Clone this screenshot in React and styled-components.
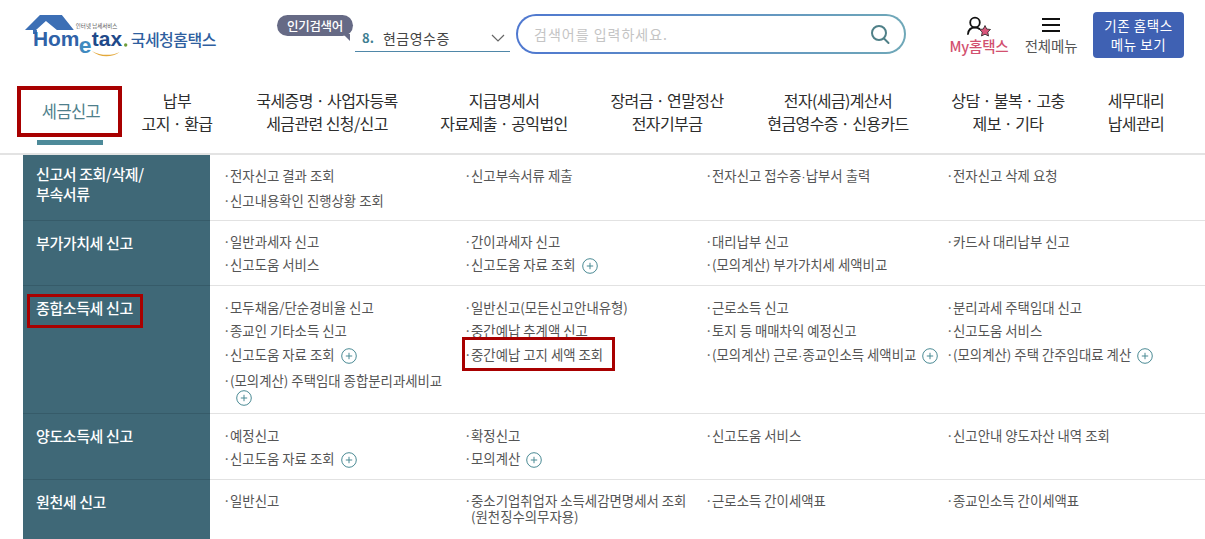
import React from 'react';
import styled, { createGlobalStyle } from 'styled-components';

const GlobalStyle = createGlobalStyle`
  html, body { margin: 0; padding: 0; background: #fff; }
  body { font-family: "Noto Sans CJK KR", "Noto Sans", sans-serif; color: #444; }
`;

const Page = styled.div`
  width: 1205px;
  height: 539px;
  overflow: hidden;
`;

const Header = styled.header`
  display: flex;
  align-items: flex-start;
  height: 75px;
  padding-left: 24px;
  box-sizing: border-box;
`;

const LogoWrap = styled.div`
  display: flex;
  align-items: flex-start;
  width: 192px;
  margin-top: 14px;
  margin-right: 61px;
`;

const LogoName = styled.span`
  margin-top: 14px;
  margin-left: 1px;
  font-size: 16px;
  line-height: 22px;
  font-weight: 500;
  letter-spacing: -0.5px;
  color: #2f5f9f;
  white-space: nowrap;
`;

const HotTag = styled.div`
  position: relative;
  width: 76px;
  height: 21px;
  margin-top: 15px;
  margin-right: 2px;
  border-radius: 11px;
  background: #666a85;
  color: #fff;
  font-size: 12.5px;
  font-weight: 500;
  line-height: 21px;
  text-align: center;
  letter-spacing: -0.3px;

  &::after {
    content: "";
    position: absolute;
    right: 3px;
    bottom: -5px;
    border-top: 7px solid #666a85;
    border-left: 7px solid transparent;
  }
`;

const HotSelect = styled.div`
  display: flex;
  align-items: center;
  width: 155px;
  height: 28px;
  margin-top: 24px;
  margin-right: 6px;
  padding-left: 7px;
  box-sizing: border-box;
  border-bottom: 1px solid #4f87a8;
  font-size: 14px;
  color: #444;
`;

const HotNum = styled.b`
  color: #3f7f92;
  font-size: 13px;
  font-weight: 700;
  margin-right: 9px;
`;

const HotText = styled.span`
  flex: 1;
  letter-spacing: 0.5px;
`;

const Chevron = styled.svg`
  width: 14px;
  height: 8px;
  margin-right: 5px;
`;

const SearchBox = styled.div`
  display: flex;
  align-items: center;
  justify-content: space-between;
  width: 390px;
  height: 40px;
  margin-top: 14px;
  padding: 0 13px 0 16px;
  box-sizing: border-box;
  border: 2px solid transparent;
  border-radius: 20px;
  background: linear-gradient(#fff, #fff) padding-box,
    linear-gradient(90deg, #4f78d0, #6fa8b8) border-box;
`;

const Placeholder = styled.span`
  font-size: 14px;
  letter-spacing: 1px;
  color: #c4c4c4;
`;

const TopLink = styled.div`
  display: flex;
  flex-direction: column;
  align-items: center;
  width: ${p => p.$w}px;
  margin-left: ${p => p.$ml}px;
  margin-top: 15px;
`;

const TopIcon = styled.svg`
  width: 30px;
  height: 22px;
`;

const TopLabel = styled.span`
  font-size: 14.5px;
  line-height: 18px;
  white-space: nowrap;
  letter-spacing: -0.2px;
  font-weight: ${p => p.$pink ? 500 : 400};
  color: ${p => p.$pink ? '#d2506f' : '#555'};
`;

const OldMenuButton = styled.button`
  width: 91px;
  height: 46px;
  margin-top: 12px;
  margin-left: 14px;
  padding: 0;
  border: 0;
  border-radius: 4px;
  background: #3f61b3;
  color: #fff;
  font-family: inherit;
  font-size: 13.5px;
  line-height: 19px;
  letter-spacing: 0.6px;
`;

const Nav = styled.nav`
  display: grid;
  grid-template-columns: 105px 110px 190px 164px 162px 180px 160px 96px;
  align-items: start;
  padding: 11px 0 0 17px;
  border-bottom: 2px solid #e3e3e3;
  height: 80px;
  box-sizing: border-box;
`;

const NavCell = styled.div`
  display: flex;
  flex-direction: column;
  align-items: center;
`;

const NavLabel = styled.a`
  display: flex;
  align-items: center;
  justify-content: center;
  width: 100%;
  height: 51px;
  box-sizing: border-box;
  padding-left: ${p => p.$active ? '3px' : '0'};
  text-align: center;
  font-size: ${p => p.$active ? '16.5px' : '16px'};
  line-height: 23px;
  letter-spacing: -0.6px;
  white-space: pre-line;
  color: ${p => p.$active ? '#4f7f8c' : '#2d2d2d'};
  border: ${p => p.$active ? '4px solid #a80000' : '0'};
`;

const NavBar = styled.span`
  width: 66px;
  height: 5px;
  margin-top: 3px;
  background: #4d8a99;
`;

const Table = styled.div`
  margin-left: 23px;
`;

const Row = styled.section`
  display: flex;
  min-height: ${p => p.$h}px;
  border-bottom: 1px solid #e2e2e2;
`;

const RowHead = styled.div`
  flex: 0 0 187px;
  box-sizing: border-box;
  padding: 9px 8px 0 13px;
  background: #3f6877;
  border-bottom: 1px solid #365b69;
  margin-bottom: -1px;
`;

const RowTitle = styled.h3`
  display: inline-block;
  margin: ${p => p.$marked ? '-4px -10px 0 -9px' : '0'};
  padding: ${p => p.$marked ? '1px 7px 7px 6px' : '0'};
  border: ${p => p.$marked ? '3px solid #a80000' : '0'};
  font-size: 15px;
  line-height: 20px;
  font-weight: 500;
  letter-spacing: -0.4px;
  color: #fff;
`;

const ItemGrid = styled.ul`
  flex: 1;
  display: grid;
  grid-template-columns: repeat(4, 241px);
  align-content: start;
  align-items: start;
  margin: 0;
  padding: ${p => p.$top}px 0 0 13px;
  list-style: none;
`;

const Item = styled.li`
  box-sizing: border-box;
  padding: 3.8px ${p => p.$marked ? '0' : '6px'} 3.8px ${p => p.$marked ? '4px' : '7px'};
  margin-left: ${p => p.$marked ? '3px' : '0'};
  width: ${p => p.$marked ? '143px' : 'auto'};
  text-indent: -7px;
  font-size: 13.4px;
  line-height: 16px;
  white-space: ${p => p.$marked ? 'nowrap' : 'normal'};
  color: #555;
  outline: ${p => p.$marked ? '3px solid #a80000' : 'none'};
  outline-offset: 2px;

  &::before {
    content: "·";
    display: inline-block;
    width: 7px;
    text-indent: 0;
  }
`;

const TightDot = styled.span`
  font-family: "Liberation Sans", sans-serif;
`;

const PlusIcon = styled.svg`
  width: 16px;
  height: 16px;
  margin-left: 6px;
  vertical-align: -4px;
  text-indent: 0;
`;

const rows = [
  {
    title: '신고서 조회/삭제/\n부속서류', h: 65, top: 8,
    items: [{ t: '전자신고 결과 조회' }, { t: '신고부속서류 제출' }, { t: '전자신고 접수증·납부서 출력' }, { t: '전자신고 삭제 요청' }, { t: '신고내용확인 진행상황 조회' }],
  },
  {
    title: '부가가치세 신고', h: 64, top: 8,
    items: [{ t: '일반과세자 신고' }, { t: '간이과세자 신고' }, { t: '대리납부 신고' }, { t: '카드사 대리납부 신고' }, { t: '신고도움 서비스' }, { t: '신고도움 자료 조회', plus: true }, { t: '(모의계산) 부가가치세 세액비교' }],
  },
  {
    title: '종합소득세 신고', h: 127, top: 9, marked: true,
    items: [
      { t: '모두채움/단순경비율 신고' }, { t: '일반신고(모든신고안내유형)' }, { t: '근로소득 신고' }, { t: '분리과세 주택임대 신고' },
      { t: '종교인 기타소득 신고' }, { t: '중간예납 추계액 신고' }, { t: '토지 등 매매차익 예정신고' }, { t: '신고도움 서비스' },
      { t: '신고도움 자료 조회', plus: true }, { t: '중간예납 고지 세액 조회', marked: true }, { t: '(모의계산) 근로·종교인소득 세액비교', plus: true }, { t: '(모의계산) 주택 간주임대료 계산', plus: true },
      { t: '(모의계산) 주택임대 종합분리과세비교', plus: true },
    ],
  },
  {
    title: '양도소득세 신고', h: 65, top: 9,
    items: [{ t: '예정신고' }, { t: '확정신고' }, { t: '신고도움 서비스' }, { t: '신고안내 양도자산 내역 조회' }, { t: '신고도움 자료 조회', plus: true }, { t: '모의계산', plus: true }],
  },
  {
    title: '원천세 신고', h: 80, top: 8,
    items: [{ t: '일반신고' }, { t: '중소기업취업자 소득세감면명세서 조회\n(원천징수의무자용)' }, { t: '근로소득 간이세액표' }, { t: '종교인소득 간이세액표' }],
  },
];

const navItems = [
  '세금신고',
  '납부\n고지 · 환급',
  '국세증명 · 사업자등록\n세금관련 신청/신고',
  '지급명세서\n자료제출 · 공익법인',
  '장려금 · 연말정산\n전자기부금',
  '전자(세금)계산서\n현금영수증 · 신용카드',
  '상담 · 불복 · 고충\n제보 · 기타',
  '세무대리\n납세관리',
];

function Logo() {
  return (
    <svg width="106" height="46" viewBox="0 0 106 46" role="img" aria-label="Hometax">
      <path d="M1 16 L16 1 L38 1 L50 16 L33 16 L22 7 L12 16 Z" fill="#3c6fb5" />
      <path d="M9 16 H13 V20 H9 Z" fill="#3c6fb5" />
      <text x="9" y="32" fontFamily="Liberation Sans, sans-serif" fontSize="21" fontWeight="700" fill="#2f62a8">Hom</text>
      <text x="55" y="39" fontFamily="Liberation Sans, sans-serif" fontSize="23" fontWeight="700" fill="#3f8ac0">e</text>
      <text x="68" y="32" fontFamily="Liberation Sans, sans-serif" fontSize="21" fontWeight="700" fill="#1f4a8a">tax</text>
      <circle cx="102" cy="31" r="1.7" fill="#6f9e3a" />
      <text x="52" y="14" fontFamily="Noto Sans CJK KR, sans-serif" fontSize="5.5" fill="#555">인터넷 납세서비스</text>
      <path d="M68 37 C76 44 88 44 96 38 C88 42 77 42 68 37 Z" fill="#e3a83a" />
    </svg>
  );
}

function SearchIcon() {
  return (
    <svg width="22" height="22" viewBox="0 0 22 22" fill="none" stroke="#4f8088" strokeWidth="2">
      <circle cx="10" cy="10" r="7" />
      <path d="M15 15.5 L19.5 20" strokeLinecap="round" />
    </svg>
  );
}

function Plus() {
  return (
    <PlusIcon viewBox="0 0 16 16" fill="none" stroke="#4a8a94">
      <circle cx="8" cy="8" r="7.3" />
      <path d="M8 4.8 V11.2 M4.8 8 H11.2" />
    </PlusIcon>
  );
}

// the site's middle dot sits tight between words, the CJK font's one is wider
function ItemText({ text }) {
  return text.split('\n').map((line, i) => (
    <React.Fragment key={i}>
      {i > 0 && <br />}
      {line.split('·').map((part, j) => (
        <React.Fragment key={j}>{j > 0 && <TightDot>·</TightDot>}{part}</React.Fragment>
      ))}
    </React.Fragment>
  ));
}

export default function App() {
  return (
    <Page>
      <GlobalStyle />
      <Header>
        <LogoWrap>
          <Logo />
          <LogoName>국세청홈택스</LogoName>
        </LogoWrap>
        <HotTag>인기검색어</HotTag>
        <HotSelect>
          <HotNum>8.</HotNum>
          <HotText>현금영수증</HotText>
          <Chevron viewBox="0 0 14 8" fill="none" stroke="#666" strokeWidth="1.2">
            <path d="M1 1 L7 7 L13 1" />
          </Chevron>
        </HotSelect>
        <SearchBox>
          <Placeholder>검색어를 입력하세요.</Placeholder>
          <SearchIcon />
        </SearchBox>
        <TopLink $w={62} $ml={42}>
          <TopIcon viewBox="0 0 30 22" fill="none">
            <circle cx="11" cy="7.5" r="4.8" stroke="#111" strokeWidth="1.8" />
            <path d="M4 19 C4.5 14 7.5 12.5 11 12.5 C13 12.5 14.5 13 15.5 14" stroke="#111" strokeWidth="1.8" strokeLinecap="round" />
            <path d="M21 10.5 L22.7 14 L26.5 14.5 L23.8 17.1 L24.5 21 L21 19.2 L17.5 21 L18.2 17.1 L15.5 14.5 L19.3 14 Z" fill="#d9557a" stroke="#222" strokeWidth="0.8" />
          </TopIcon>
          <TopLabel $pink>My홈택스</TopLabel>
        </TopLink>
        <TopLink $w={56} $ml={13}>
          <TopIcon viewBox="0 0 30 22" stroke="#111" strokeWidth="2">
            <path d="M6 4 H24 M6 10 H24 M6 16 H24" />
          </TopIcon>
          <TopLabel>전체메뉴</TopLabel>
        </TopLink>
        <OldMenuButton>기존 홈택스<br />메뉴 보기</OldMenuButton>
      </Header>

      <Nav>
        {navItems.map((label, i) => (
          <NavCell key={label}>
            <NavLabel $active={i === 0}>{label}</NavLabel>
            {i === 0 && <NavBar />}
          </NavCell>
        ))}
      </Nav>

      <Table>
        {rows.map(row => (
          <Row key={row.title} $h={row.h}>
            <RowHead>
              <RowTitle $marked={row.marked}>
                {row.title.split('\n').map((line, i) => <React.Fragment key={i}>{i > 0 && <br />}{line}</React.Fragment>)}
              </RowTitle>
            </RowHead>
            <ItemGrid $top={row.top}>
              {row.items.map(item => (
                <Item key={item.t} $marked={item.marked}>
                  <ItemText text={item.t} />
                  {item.plus && <Plus />}
                </Item>
              ))}
            </ItemGrid>
          </Row>
        ))}
      </Table>
    </Page>
  );
}
